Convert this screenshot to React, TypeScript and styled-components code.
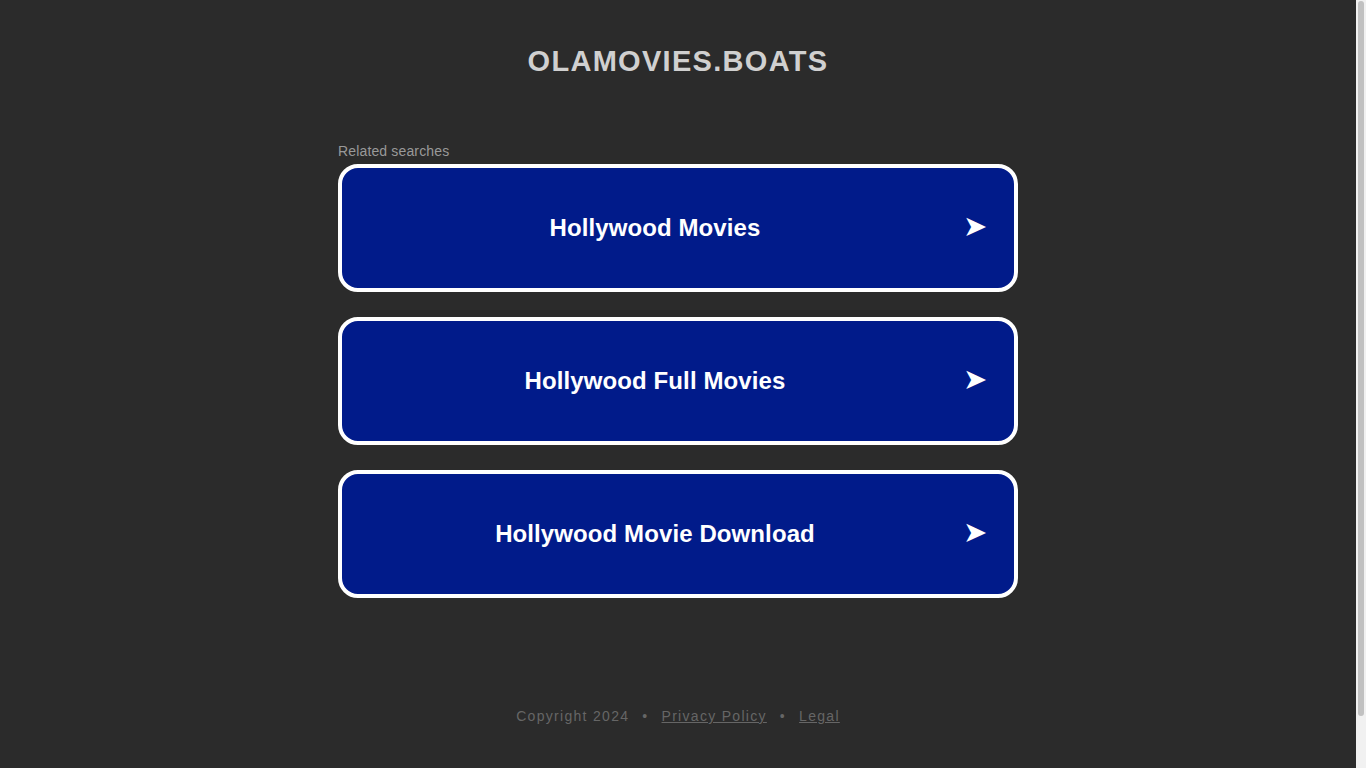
import React from "react";
import styled, { createGlobalStyle } from "styled-components";

const Global = createGlobalStyle`
  html, body { margin: 0; padding: 0; background: #2b2b2b; }
  body { font-family: "Liberation Sans", Arial, sans-serif; }
`;

const Page = styled.div`
  min-height: 768px;
  display: flex;
  flex-direction: column;
  align-items: center;
  box-sizing: border-box;
  padding: 43px 10px 0 0;
`;

const ScrollTrack = styled.div`
  position: fixed;
  top: 0;
  right: 0;
  width: 10px;
  height: 100vh;
  background: #f1f1f1;
`;

const ScrollThumb = styled.div`
  position: absolute;
  top: 1px;
  left: 2px;
  width: 6px;
  height: 715px;
  background: #c1c1c1;
  border-radius: 3px;
`;

const Title = styled.h1`
  margin: 0;
  font-size: 29px;
  line-height: 36px;
  font-weight: 700;
  letter-spacing: 1.3px;
  color: #d0d0d0;
`;

const Section = styled.div`
  width: 680px;
  margin-top: 64px;
  display: flex;
  flex-direction: column;
`;

const Label = styled.div`
  font-size: 14px;
  line-height: 16px;
  letter-spacing: 0.15px;
  color: #999999;
  margin-bottom: 5px;
`;

const List = styled.div`
  display: flex;
  flex-direction: column;
  gap: 25px;
`;

const Card = styled.a`
  display: flex;
  align-items: center;
  height: 128px;
  box-sizing: border-box;
  border: 4px solid #ffffff;
  border-radius: 20px;
  background: #011b8a;
  color: #ffffff;
  text-decoration: none;
  padding: 0 27px 0 5px;
`;

const CardText = styled.span`
  flex: 1;
  text-align: center;
  font-size: 24px;
  letter-spacing: 0.1px;
  font-weight: 700;
`;

const Arrow = styled.span`
  font-size: 29px;
  line-height: 1;
  color: #ffffff;
  margin-bottom: 4px;
`;

const Footer = styled.div`
  margin-top: 110px;
  font-size: 14px;
  letter-spacing: 1.3px;
  color: #666666;
  display: flex;
  align-items: center;
  gap: 13px;
`;

const FooterLink = styled.a`
  color: #666666;
  text-decoration: underline;
`;

const items = ["Hollywood Movies", "Hollywood Full Movies", "Hollywood Movie Download"];

export default function App() {
  return (
    <>
      <Global />
      <Page>
        <Title>OLAMOVIES.BOATS</Title>
        <Section>
          <Label>Related searches</Label>
          <List>
            {items.map((t) => (
              <Card key={t} href="#">
                <CardText>{t}</CardText>
                <Arrow>➤</Arrow>
              </Card>
            ))}
          </List>
        </Section>
        <Footer>
          <span>Copyright 2024</span>
          <span>•</span>
          <FooterLink href="#">Privacy Policy</FooterLink>
          <span>•</span>
          <FooterLink href="#">Legal</FooterLink>
        </Footer>
      </Page>
      <ScrollTrack>
        <ScrollThumb />
      </ScrollTrack>
    </>
  );
}
